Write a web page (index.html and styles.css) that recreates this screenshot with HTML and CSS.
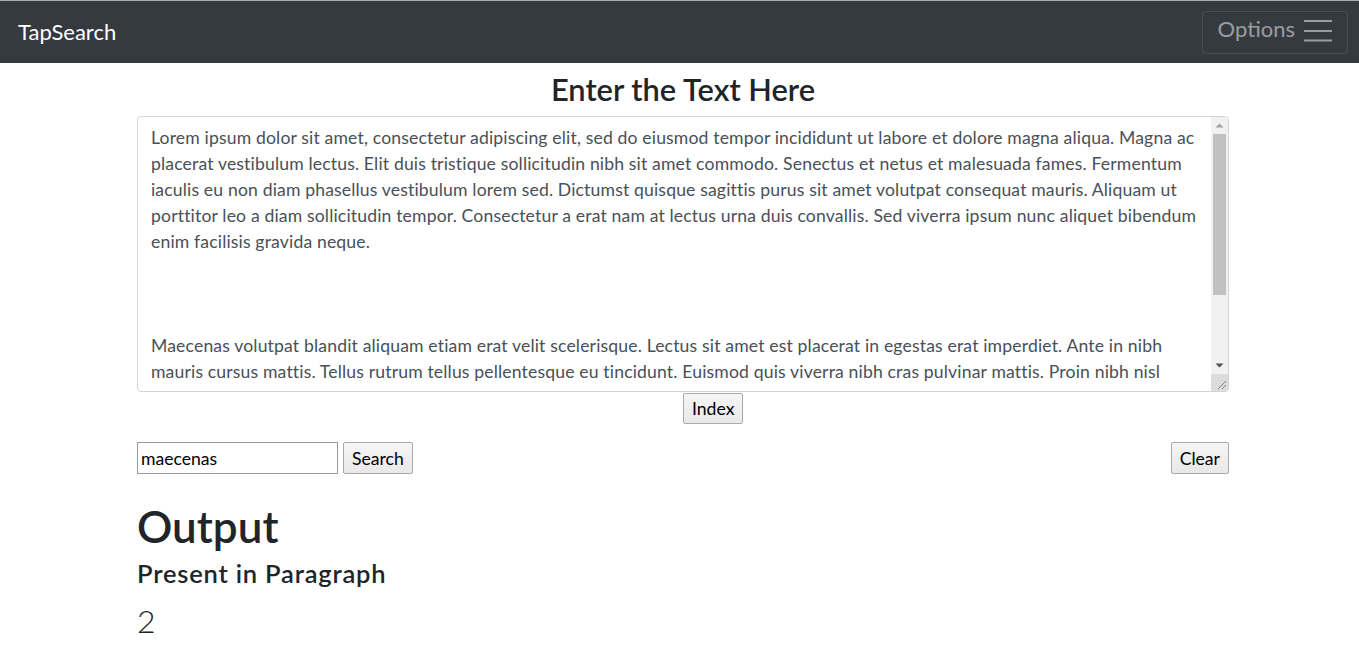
FILE: index.html
```html
<!DOCTYPE html>
<html lang="en">
<head>
<meta charset="utf-8">
<title>TapSearch</title>
<link rel="stylesheet" href="styles.css">
</head>
<body>
<header class="navbar">
  <span class="brand">TapSearch</span>
  <button class="toggler" type="button">
    <span class="toggler-label">Options</span>
    <svg class="burger" width="28" height="24" viewBox="0 0 28 24" aria-hidden="true">
      <path d="M0 2h28M0 12h28M0 21.5h28" stroke="#9a9da0" stroke-width="2.2" fill="none"/>
    </svg>
  </button>
</header>
<main class="container">
  <h3 class="title">Enter the Text Here</h3>
  <div class="editor-wrap">
    <textarea class="editor" wrap="off" spellcheck="false">Lorem ipsum dolor sit amet, consectetur adipiscing elit, sed do eiusmod tempor incididunt ut labore et dolore magna aliqua. Magna ac
placerat vestibulum lectus. Elit duis tristique sollicitudin nibh sit amet commodo. Senectus et netus et malesuada fames. Fermentum
iaculis eu non diam phasellus vestibulum lorem sed. Dictumst quisque sagittis purus sit amet volutpat consequat mauris. Aliquam ut
porttitor leo a diam sollicitudin tempor. Consectetur a erat nam at lectus urna duis convallis. Sed viverra ipsum nunc aliquet bibendum
enim facilisis gravida neque.



Maecenas volutpat blandit aliquam etiam erat velit scelerisque. Lectus sit amet est placerat in egestas erat imperdiet. Ante in nibh
mauris cursus mattis. Tellus rutrum tellus pellentesque eu tincidunt. Euismod quis viverra nibh cras pulvinar mattis. Proin nibh nisl
condimentum id venenatis a condimentum vitae sapien. Nunc sed augue lacus viverra vitae congue eu consequat. Aliquet nibh
praesent tristique magna sit amet purus gravida quis. Tincidunt lobortis feugiat vivamus at augue eget arcu dictum varius.
Vitae congue mauris rhoncus aenean vel elit scelerisque mauris pellentesque. Maecenas accumsan lacus vel facilisis volutpat.
Pharetra magna ac placerat vestibulum lectus mauris ultrices eros in.</textarea>
    <div class="vscroll" aria-hidden="true">
      <div class="vs-btn">
        <svg width="17" height="17" viewBox="0 0 17 17"><path d="M4.5 10.5L8.5 6.5L12.5 10.5Z" fill="#a3a3a3"/></svg>
      </div>
      <div class="vs-track"><div class="vs-thumb"></div></div>
      <div class="vs-btn">
        <svg width="17" height="17" viewBox="0 0 17 17"><path d="M4.5 6.5L8.5 10.5L12.5 6.5Z" fill="#505050"/></svg>
      </div>
      <div class="vs-corner">
        <svg width="17" height="17" viewBox="0 0 17 17"><path d="M15 7L7 15M15 11L11 15" stroke="#808080" stroke-width="1" fill="none"/></svg>
      </div>
    </div>
  </div>
  <div class="index-row">
    <button class="btn" type="button">Index</button>
  </div>
  <div class="search-row">
    <div class="search-left">
      <input class="query" type="text" value="maecenas">
      <button class="btn" type="button">Search</button>
    </div>
    <button class="btn" type="button">Clear</button>
  </div>
  <h1 class="out-title">Output</h1>
  <h4 class="out-sub">Present in Paragraph</h4>
  <p class="count">2</p>
</main>
</body>
</html>
```

FILE: styles.css
```css
* { box-sizing: border-box; }

html, body {
  margin: 0;
  padding: 0;
  background: #ffffff;
}

body {
  font-family: Lato, "Open Sans", Arial, sans-serif;
  font-size: 17.6px;
  line-height: 26.4px;
  color: #212529;
}

.navbar {
  height: 63px;
  border-top: 1px solid #a9abad;
  background: #343a40;
  display: flex;
  align-items: center;
  justify-content: space-between;
  padding: 0 11px 0 18px;
}

.brand {
  color: #ffffff;
  font-size: 22px;
  line-height: 30px;
}

.toggler {
  height: 43px;
  display: flex;
  align-items: center;
  gap: 9px;
  padding: 0 15px 0 15px;
  background: transparent;
  border: 1px solid rgba(255, 255, 255, 0.1);
  border-radius: 4px;
  font-family: inherit;
  font-size: 22px;
  color: rgba(255, 255, 255, 0.5);
}

.toggler-label {
  line-height: 26px;
  padding-bottom: 6px;
}

.burger { display: block; width: 28px; height: 24px; margin-bottom: 2px; }

.container {
  margin: 0 130px 0 137px;
  width: 1092px;
}

.title {
  margin: 8px 0 8px;
  text-align: center;
  font-size: 30.8px;
  line-height: 37px;
  font-weight: 600;
  color: #212529;
}

.editor-wrap {
  position: relative;
  height: 276px;
}

.editor {
  display: block;
  width: 100%;
  height: 276px;
  margin: 0;
  padding: 8px 30px 6px 13px;
  border: 1px solid #ced4da;
  border-radius: 4px;
  font-family: inherit;
  font-size: 17.6px;
  line-height: 26px;
  letter-spacing: 0.15px;
  color: #495057;
  white-space: pre;
  overflow: hidden;
  resize: none;
}

.vscroll {
  position: absolute;
  top: 1px;
  right: 1px;
  bottom: 1px;
  width: 17px;
  display: flex;
  flex-direction: column;
  background: #f1f1f1;
  border-top-right-radius: 3px;
  border-bottom-right-radius: 3px;
  overflow: hidden;
}

.vs-btn { height: 17px; flex: none; }
.vs-btn svg, .vs-corner svg { display: block; }

.vs-track {
  flex: 1;
  padding: 0 2px 0 2px;
}

.vs-thumb {
  height: 161px;
  background: #c1c1c1;
}

.vs-corner {
  height: 17px;
  flex: none;
  background: #dcdcdc;
}

.btn {
  height: 32px;
  padding: 0 8px;
  border: 1px solid #a9a9a9;
  border-radius: 2px;
  background: linear-gradient(#f6f6f6, #e8e8e8);
  font-family: inherit;
  font-size: 17.6px;
  color: #000000;
}

.index-row {
  display: flex;
  padding-left: 546px;
  margin-top: 1px;
}
.index-row .btn { height: 31px; width: 60px; }

.search-row {
  display: flex;
  align-items: center;
  justify-content: space-between;
  margin-top: 18px;
}

.search-left {
  display: flex;
  align-items: center;
  gap: 5px;
}

.query {
  width: 201px;
  height: 32px;
  margin: 0;
  padding: 0 3px;
  border: 1px solid #9a9a9a;
  font-family: inherit;
  font-size: 17.6px;
  color: #000000;
}

.out-title {
  margin: 25px 0 4px;
  font-size: 44px;
  line-height: 55px;
  font-weight: 600;
  color: #212529;
}

.out-sub {
  margin: 0 0 13px;
  font-size: 25.5px;
  line-height: 30px;
  letter-spacing: 0.8px;
  font-weight: 600;
  color: #212529;
}

.count {
  margin: 0;
  font-size: 32px;
  line-height: 40px;
  font-weight: 300;
  color: #212529;
}
```
